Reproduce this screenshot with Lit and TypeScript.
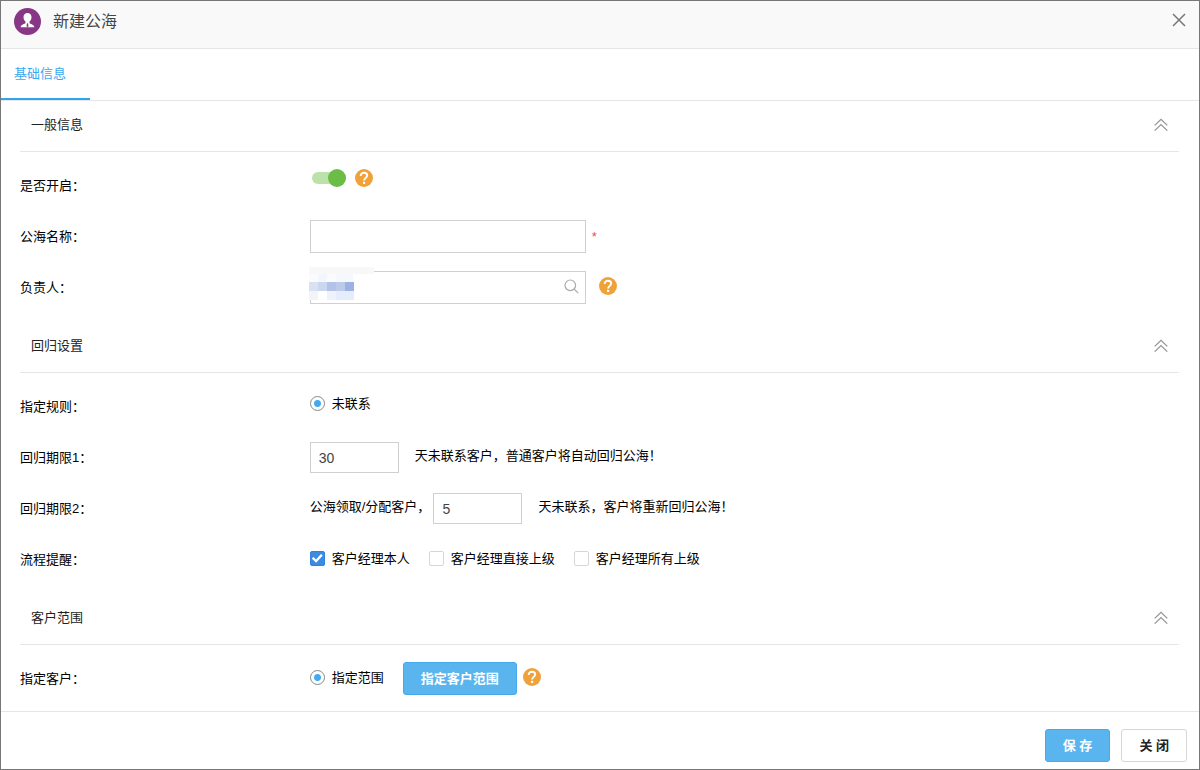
import { LitElement, html, css, svg } from "lit";
import { customElement, property } from "lit/decorators.js";

const FONT = css`"Liberation Sans", "Noto Sans CJK SC", sans-serif`;

@customElement("help-tip")
class HelpTip extends LitElement {
  static styles = css`
    :host { display: inline-flex; flex: none; }
    .tip { all: unset; display: flex; cursor: pointer; }
    .tip:focus-visible { outline: 2px solid #5ab5ef; border-radius: 50%; }
  `;
  render() {
    return html`<button class="tip" type="button" aria-label="帮助">
      <svg width="18" height="18" viewBox="0 0 18 18" aria-hidden="true">
        <circle cx="9" cy="9" r="9" fill="#f0a23a" />
        <path d="M5.7 6.900C5.700 4.900 7 3.800 8.900 3.800S12.200 4.900 12.200 6.600C12.200 8.800 9.100 9 9.100 11.600"
          fill="none" stroke="#fff" stroke-width="1.9" />
        <rect x="8" y="12.800" width="2.200" height="2.200" fill="#fff" />
      </svg>
    </button>`;
  }
}

@customElement("form-section")
class FormSection extends LitElement {
  @property() heading = "";
  static styles = css`
    :host { display: block; }
    .head {
      display: flex; align-items: center; justify-content: space-between; box-sizing: border-box;
      height: 51px; padding: 0 11px 3px; border-bottom: 1px solid #e6e6e6;
    }
    .title { margin: 0; font-size: 13px; line-height: 20px; font-weight: 400; color: #222; }
    .fold { all: unset; display: flex; cursor: pointer; }
    .rows { padding: 8px 0 7px; }
  `;
  render() {
    return html`
      <div class="head">
        <h2 class="title">${this.heading}</h2>
        <button class="fold" type="button" aria-label="收起">
          <svg width="14" height="14" viewBox="0 0 14 14" fill="none" stroke="#949494" stroke-width="1.3" aria-hidden="true">
            <path d="M.7 7.400 7 1.400 13.300 7.400M.7 12.600 7 6.600 13.300 12.600" />
          </svg>
        </button>
      </div>
      <div class="rows"><slot></slot></div>`;
  }
}

@customElement("app-root")
class AppRoot extends LitElement {
  static styles = css`
    :host { display: block; font-family: ${FONT}; font-size: 13px; line-height: 20px; color: #000; }
    * { box-sizing: border-box; }
    .dialog {
      display: flex; flex-direction: column; min-height: 100vh;
      border: 1px solid #777; background: #fff;
    }
    .header {
      display: flex; align-items: center; gap: 12px; height: 48px;
      padding: 0 13px 6px; background: #f9f9f9; border-bottom: 1px solid #e6e6e6;
    }
    .name { flex: 1; margin: 0; font-size: 16px; line-height: 24px; font-weight: 400; color: #444; }
    .close { display: flex; padding: 0 0 4px; border: 0; background: none; cursor: pointer; }
    .tabs { display: flex; height: 52px; border-bottom: 1px solid #e6e6e6; }
    .tab {
      width: 89px; padding: 0 22px 0 13px; font: inherit; text-align: left; white-space: nowrap;
      color: #38a9ef; background: none; border: 0; border-bottom: 2px solid #2fa5ee; cursor: pointer;
    }
    .body { flex: 1; padding: 0 20px 0 19px; }
    form-section + form-section { margin-top: 2px; }
    .row { display: grid; grid-template-columns: 25% 1fr; align-items: center; height: 51px; }
    .control { display: flex; align-items: center; }
    .raised { padding-bottom: 16px; }
    .lifted { padding-bottom: 4px; }
    .text {
      width: 276px; height: 33px; padding: 0 8px; font: inherit; color: #444;
      border: 1px solid #d0d0d0; border-radius: 0; background: #fff;
    }
    .short { width: 89px; height: 31px; font-size: 14px; }
    .hint + .short { margin-left: 3px; }
    .star { margin-left: 6px; color: #e8503f; line-height: 16px; }
    .hint { padding-bottom: 3px; }
    .gap { margin-left: 16px; }
    .lookup { position: relative; display: flex; }
    .find { position: absolute; right: 7px; top: 8px; display: flex; padding: 0; border: 0; background: none; }
    .mosaic { position: absolute; left: -1px; top: -4px; }
    .help { padding-bottom: 4px; }
    .lookup + .help { margin-left: 13px; }
    .switch {
      appearance: none; display: flex; align-items: center; justify-content: flex-end; width: 34px; height: 12px;
      margin: 0 9px 0 2px; border-radius: 6px; background: #bde1ab;
    }
    .switch::before { content: ""; width: 18px; height: 18px; flex: none; border-radius: 50%; background: #6cbd47; }
    .switch:not(:checked) { justify-content: flex-start; background: #ccc; }
    .option { display: flex; align-items: center; gap: 7px; margin-right: 19px; padding-bottom: 2px; }
    .radio {
      appearance: none; width: 15px; height: 15px; margin: 0; border: 1px solid #888; border-radius: 50%;
      background: #fff;
    }
    .radio:checked { background: radial-gradient(circle, #43aaf0 3px, #fff 4px); }
    .box { appearance: none; display: grid; place-items: center; width: 15px; height: 15px; margin: 0;
      border: 1px solid #d6d6d6; border-radius: 2px; background: #fff; }
    .box:checked { border-color: #3580dc; background: #3c8ae2; }
    .box:checked::before {
      content: ""; width: 11px; height: 9px; background: #fff;
      clip-path: polygon(0 50%, 16% 32%, 38% 60%, 84% 0, 100% 16%, 40% 98%);
    }
    .btn {
      height: 33px; padding: 0 17px; font: inherit; font-weight: 700; border: 1px solid #d6d6d6;
      border-radius: 3px; background: #fff; color: #222; white-space: pre; cursor: pointer;
    }
    .primary { color: #fff; background: #5ab5ef; border-color: #45aaec; }
    .scope { margin-right: 6px; }
    .footer {
      display: flex; justify-content: flex-end; gap: 11px;
      padding: 17px 12px 7px; border-top: 1px solid #e6e6e6;
    }
  `;

  private row(label: string, forId: string, control: unknown, mod = "") {
    return html`<div class="row">
      <label for=${forId}>${label}</label>
      <div class="control ${mod}">${control}</div>
    </div>`;
  }

  private check(id: string, text: string, checked: boolean) {
    return html`<label class="option"><input class="box" type="checkbox" id=${id} .checked=${checked} />${text}</label>`;
  }

  private mosaic() {
    const cells: [number, number, number, number, string][] = [
      [0, 0, 65, 7, "#f8f8f9"], [0, 7, 44, 8, "#fafbfe"], [9, 7, 9, 8, "#f3f6fc"], [27, 7, 17, 8, "#f5f8fd"],
      [0, 15, 9, 9, "#dae2f1"], [9, 15, 9, 9, "#cbd6ef"], [18, 15, 9, 9, "#b5c2e8"],
      [27, 15, 9, 9, "#bccae9"], [36, 15, 9, 9, "#9cb2e3"],
      [0, 24, 9, 9, "#f2f4fa"], [9, 24, 9, 9, "#ffffff"], [18, 24, 9, 9, "#edf2fb"], [27, 24, 18, 9, "#e6edfa"],
    ];
    return html`<svg class="mosaic" width="65" height="33" viewBox="0 0 65 33" aria-hidden="true">
      ${cells.map(([x, y, w, h, c]) => svg`<rect x=${x} y=${y} width=${w} height=${h} fill=${c} />`)}
    </svg>`;
  }

  render() {
    return html`
      <div class="dialog" role="dialog" aria-label="新建公海">
        <header class="header">
          <svg width="27" height="27" viewBox="0 0 27 27" aria-hidden="true">
            <circle cx="13.500" cy="13.500" r="13.500" fill="#883786" />
            <path fill="#fff" d="M13.500 5c-2.500 0-4 1.800-4 4.200 0 1.900.8 3.500 2 4.400v1.400c-.5 1.100-4.800 1.400-4.800 4.200h13.600c0-2.800-4.300-3.100-4.800-4.200v-1.400c1.200-.9 2-2.500 2-4.400 0-2.400-1.500-4.200-4-4.200z" />
            <path fill="#883786" d="M13 15.200h1l.5 3-1 1-1-1z" />
          </svg>
          <h1 class="name">新建公海</h1>
          <button class="close" type="button" aria-label="关闭窗口">
            <svg width="14" height="14" viewBox="0 0 14 14" stroke="#777" stroke-width="1.500" aria-hidden="true">
              <path d="M1 1 13 13M13 1 1 13" />
            </svg>
          </button>
        </header>
        <nav class="tabs"><button class="tab" type="button">基础信息</button></nav>
        <main class="body">
          <form-section heading="一般信息">
            ${this.row("是否开启：", "enabled", html`
              <input class="switch" id="enabled" type="checkbox" role="switch" checked />
              <help-tip></help-tip>`, "raised")}
            ${this.row("公海名称：", "name", html`
              <input class="text" id="name" type="text" required /><span class="star">*</span>`)}
            ${this.row("负责人：", "owner", html`
              <div class="lookup">
                <input class="text" id="owner" type="text" />
                ${this.mosaic()}
                <button class="find" type="button" aria-label="查找">
                  <svg width="15" height="15" viewBox="0 0 15 15" fill="none" stroke="#aaa" stroke-width="1.200" aria-hidden="true">
                    <circle cx="6.300" cy="6.300" r="5.300" /><path d="m10.200 10.200 4 4" />
                  </svg>
                </button>
              </div>
              <help-tip class="help"></help-tip>`)}
          </form-section>
          <form-section heading="回归设置">
            ${this.row("指定规则：", "rule", html`
              <label class="option"><input class="radio" id="rule" type="radio" name="rule" checked />未联系</label>`, "lifted")}
            ${this.row("回归期限1：", "term1", html`
              <input class="text short" id="term1" type="text" value="30" />
              <span class="hint gap">天未联系客户，普通客户将自动回归公海！</span>`)}
            ${this.row("回归期限2：", "term2", html`
              <span class="hint">公海领取/分配客户，</span>
              <input class="text short" id="term2" type="text" value="5" />
              <span class="hint gap">天未联系，客户将重新回归公海！</span>`)}
            ${this.row("流程提醒：", "self", html`
              ${this.check("self", "客户经理本人", true)}
              ${this.check("direct", "客户经理直接上级", false)}
              ${this.check("all", "客户经理所有上级", false)}`)}
          </form-section>
          <form-section heading="客户范围">
            ${this.row("指定客户：", "scope", html`
              <label class="option"><input class="radio" id="scope" type="radio" name="scope" checked />指定范围</label>
              <button class="btn primary scope" type="button">指定客户范围</button>
              <help-tip class="help"></help-tip>`)}
          </form-section>
        </main>
        <footer class="footer">
          <button class="btn primary" type="button">保 存</button>
          <button class="btn" type="button">关 闭</button>
        </footer>
      </div>`;
  }
}
